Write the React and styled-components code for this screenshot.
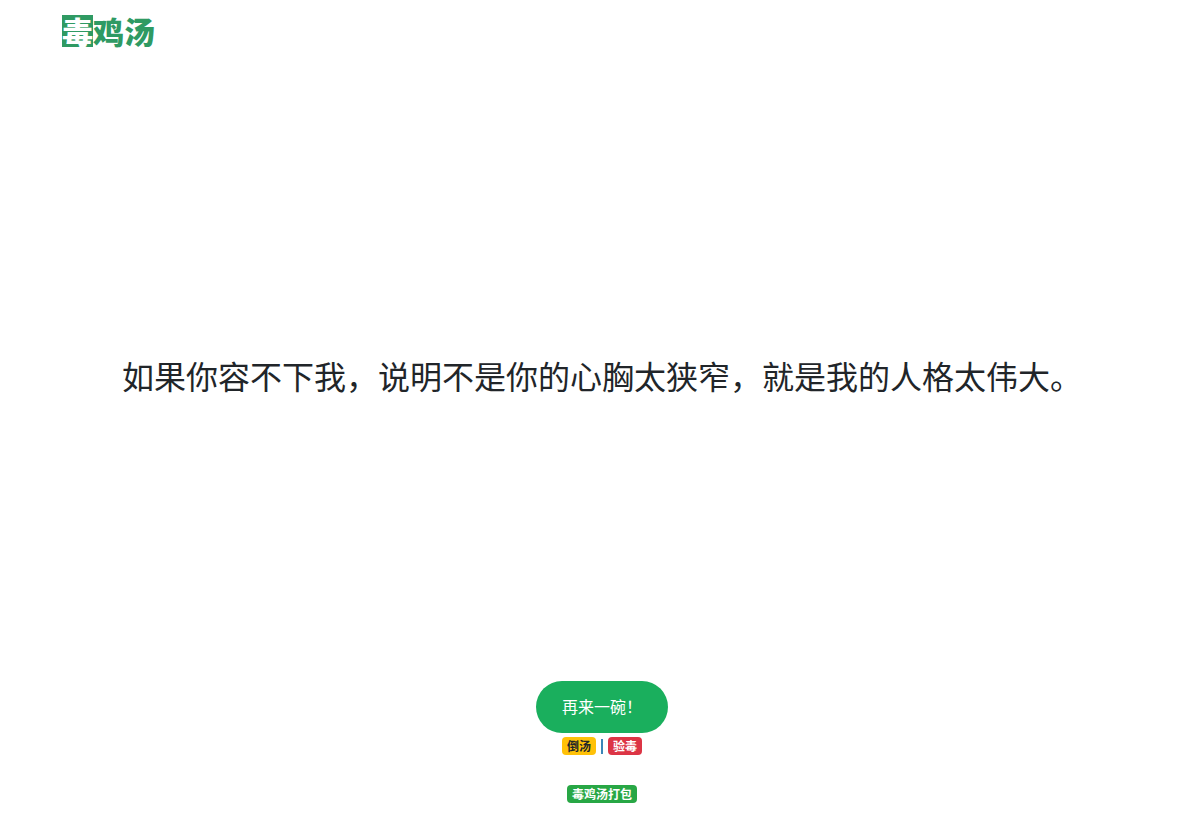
import React from 'react';
import styled, { createGlobalStyle } from 'styled-components';

const GlobalStyle = createGlobalStyle`
  html, body {
    margin: 0;
    padding: 0;
    background: #fff;
  }
  body {
    font-family: "Noto Sans CJK SC", "Liberation Sans", sans-serif;
    color: #212529;
  }
`;

const Page = styled.div`
  height: 830px;
  box-sizing: border-box;
  padding-left: 20px;
  display: flex;
  flex-direction: column;
  overflow: hidden;
`;

const Header = styled.header`
  height: 64px;
  padding: 15px 0 0 42px;
  box-sizing: border-box;
`;

const Logo = styled.a`
  display: inline-flex;
  align-items: center;
  height: 32px;
  font-size: 31px;
  line-height: 32px;
  font-weight: 900;
  color: #2f9a63;
  text-decoration: none;
`;

const LogoMark = styled.span`
  display: inline-block;
  width: 31px;
  height: 32px;
  background: #2f9a63;
  color: #fff;
`;

const Main = styled.main`
  height: 617px;
  padding-top: 4px;
  box-sizing: border-box;
  display: flex;
  align-items: center;
  justify-content: center;
`;

const Quote = styled.p`
  margin: 0;
  font-size: 32px;
  line-height: 48px;
  font-weight: 400;
  white-space: nowrap;
`;

const Actions = styled.div`
  display: flex;
  flex-direction: column;
  align-items: center;
`;

const MoreButton = styled.button`
  width: 132px;
  height: 52px;
  padding: 0 0 2px;
  border: 0;
  border-radius: 26px;
  background: #1aaf5d;
  color: #fff;
  font-family: inherit;
  font-size: 16px;
  cursor: pointer;
`;

const BadgeRow = styled.div`
  display: flex;
  align-items: center;
  gap: 4px;
  margin-top: 4px;
  height: 18px;
`;

const Badge = styled.a`
  display: inline-block;
  height: 18px;
  padding: 0 5px;
  border-radius: 4px;
  background: ${props => props.$bg};
  color: ${props => props.$color};
  font-size: 12px;
  line-height: 18px;
  font-weight: 700;
  text-decoration: none;
`;

const Divider = styled.span`
  width: 2px;
  height: 15px;
  margin: 0 1px;
  background: #3b86b8;
`;

const Download = styled.div`
  margin-top: 30px;
  height: 18px;
  display: flex;
`;

const App = () => {
  return (
    <>
      <GlobalStyle />
      <Page>
        <Header>
          <Logo href="#">
            <LogoMark>毒</LogoMark>
            鸡汤
          </Logo>
        </Header>
        <Main>
          <Quote>如果你容不下我{'\uFF0C'}说明不是你的心胸太狭窄{'\uFF0C'}就是我的人格太伟大。</Quote>
        </Main>
        <Actions>
          <MoreButton>再来一碗{'\uFF01'}</MoreButton>
          <BadgeRow>
            <Badge href="#" $bg="#ffc107" $color="#212529">倒汤</Badge>
            <Divider />
            <Badge href="#" $bg="#dc3545" $color="#fff">验毒</Badge>
          </BadgeRow>
          <Download>
            <Badge href="#" $bg="#28a745" $color="#fff">毒鸡汤打包</Badge>
          </Download>
        </Actions>
      </Page>
    </>
  );
};

export default App;
